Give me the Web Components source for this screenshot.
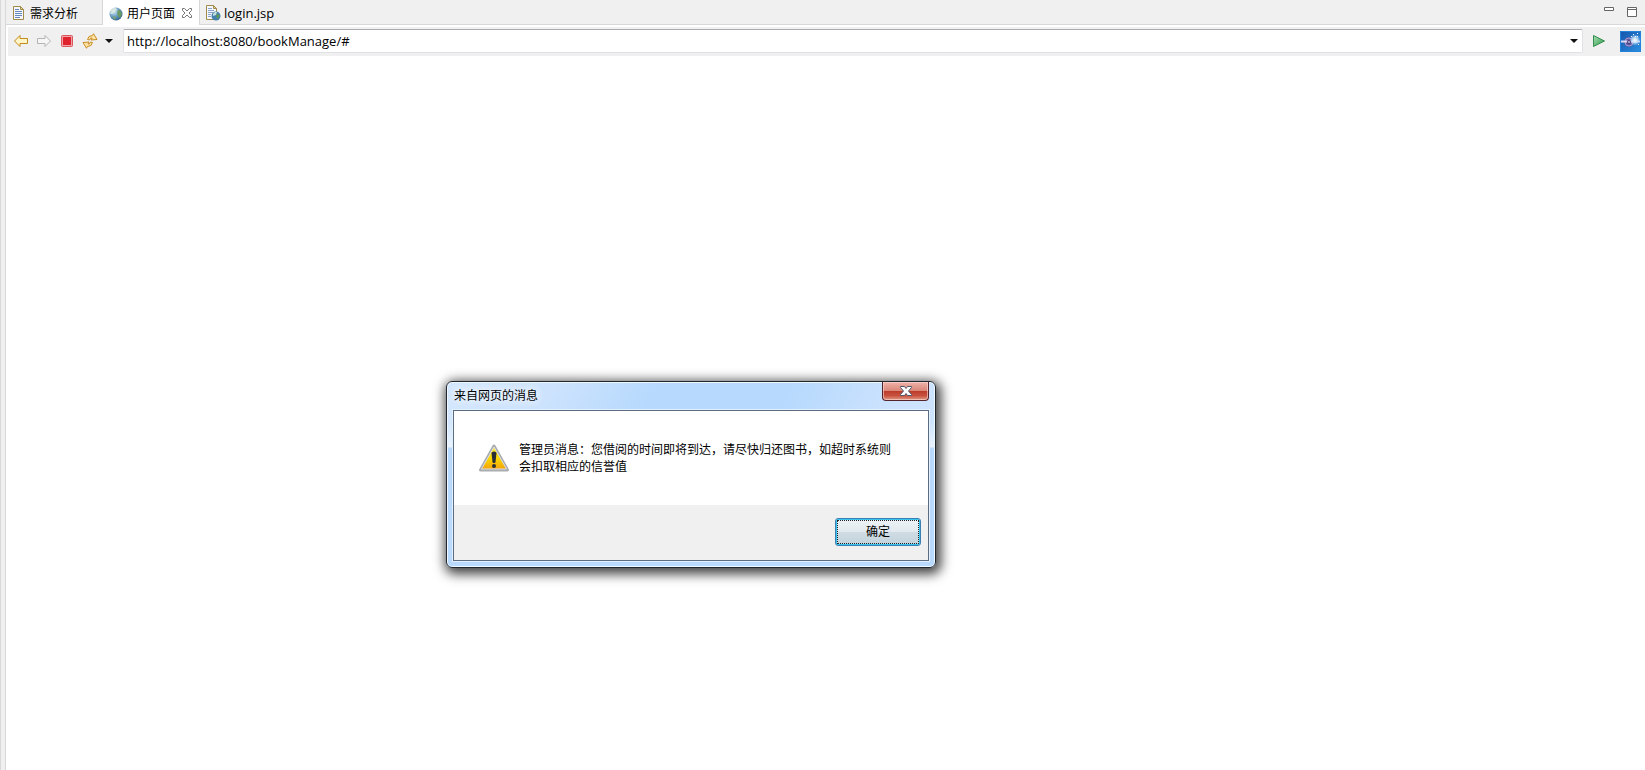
<!DOCTYPE html>
<html lang="zh-CN">
<head>
<meta charset="utf-8">
<title>用户页面</title>
<style>
    html, body {
      margin: 0;
      height: 100%;
      overflow: hidden;
    }
    body {
      font: 12px/17px "Open Sans", "Noto Sans CJK SC", sans-serif;
      color: #000;
    }
</style>
</head>
<body>
<browser-view></browser-view>

<script>
const ICONS = {
    doc: `<svg width="16" height="16" viewBox="0 0 16 16">
      <path d="M2.500 1.500h7l3 3v10h-10z" fill="#f4f8fe" stroke="#a08a4c"/>
      <path d="M9.500 1.500v3h3z" fill="#f1dc9b" stroke="#a08a4c"/>
      <path d="M4 4.500h4M4 6.500h7M4 8.500h7M4 10.500h7M4 12.500h5" stroke="#6488bd"/>
    </svg>`,
    globe: `<svg width="16" height="16" viewBox="0 0 16 16">
      <defs><radialGradient id="sea" cx=".35" cy=".3" r=".8">
        <stop offset="0" stop-color="#d5eaf5"/><stop offset=".5" stop-color="#6b9fc5"/><stop offset="1" stop-color="#245583"/>
      </radialGradient></defs>
      <circle cx="8" cy="8" r="6.500" fill="url(#sea)"/>
      <path d="M3 4q3-3 5-2l1 2-2 1-1 2-2 1-2 0z" fill="#e4efe0" opacity=".7"/>
      <path d="M10 4l2 0 2 4-2 4-2-2-1-3z" fill="#6d9a5c" opacity=".9"/>
      <path d="M5 10l3 1-1 3-2-2z" fill="#7ba36c" opacity=".9"/>
    </svg>`,
    jsp: `<svg width="16" height="16" viewBox="0 0 16 16">
      <path d="M1.500.500h7l3 3v11h-10z" fill="#f4f8fe" stroke="#a08a4c"/>
      <path d="M8.500.500v3h3z" fill="#f1dc9b" stroke="#a08a4c"/>
      <path d="M3 3.500h4M3 5.500h6M3 7.500h5M3 9.500h3M3 11.500h3" stroke="#8aa2c9"/>
      <circle cx="11" cy="11" r="4.500" fill="#447fae"/>
      <path d="M8 9q2-3 4-2l-1 3-3 1z" fill="#c4deda"/>
      <path d="M12 9l3 1-2 4-2-2z" fill="#5c965a"/>
    </svg>`,
    close: `<svg width="12" height="12" viewBox="0 0 12 12">
      <path d="M1.500 1.500h2L6 4l2.500-2.500h2v2L8 6l2.500 2.500v2h-2L6 8l-2.500 2.500h-2v-2L4 6 1.500 3.500z" fill="#fff" stroke="#777"/>
    </svg>`,
    minimize: `<svg width="12" height="12" viewBox="0 0 12 12">
      <path d="M1.500 1.500h9v3h-9z" fill="#fff" stroke="#666"/>
    </svg>`,
    maximize: `<svg width="12" height="12" viewBox="0 0 12 12">
      <path d="M1.500 1.500h9v9h-9zM1 3.500h10" fill="#fff" stroke="#666"/>
    </svg>`,
    back: `<svg width="16" height="16" viewBox="0 0 16 16">
      <path d="M1.500 8l5.500-5.500v3h7.500v5H7v3z" fill="#fff5c6" stroke="#c28b1c" stroke-linejoin="round"/>
    </svg>`,
    forward: `<svg width="16" height="16" viewBox="0 0 16 16">
      <path d="M14.500 8L9 2.500v3H1.500v5H9v3z" fill="#f6f6f6" stroke="#b4b4b4" stroke-linejoin="round"/>
    </svg>`,
    stop: `<svg width="16" height="16" viewBox="0 0 16 16">
      <rect x="2.500" y="2.500" width="11" height="11" rx="1" fill="#f0a4a6" stroke="#d9575d"/>
      <rect x="4" y="4" width="8" height="8" fill="#e0222f"/>
    </svg>`,
    refresh: `<svg width="16" height="16" viewBox="0 0 16 16">
      <defs><path id="turn" d="M5.500 6.500Q6 2.500 10.500 2.500L11.500.700l3.500 5.800-6 .5 1-2Q8.500 4.500 7.500 7z" fill="#fbe2a0" stroke="#c78e29" stroke-linejoin="round"/></defs>
      <use href="#turn"/>
      <use href="#turn" transform="rotate(180 8 8)"/>
    </svg>`,
    caret: `<svg width="8" height="4" viewBox="0 0 8 4"><path d="M0 0h8L4 4z" fill="#111"/></svg>`,
    go: `<svg width="16" height="16" viewBox="0 0 16 16">
      <defs><linearGradient id="leaf" x2="1" y2="1"><stop offset="0" stop-color="#a6deb0"/><stop offset="1" stop-color="#2f9a4c"/></linearGradient></defs>
      <path d="M2.500 2.500L13.500 8l-11 5.500z" fill="url(#leaf)" stroke="#338d4c" stroke-linejoin="round"/>
    </svg>`,
    brand: `<svg width="21" height="21" viewBox="0 0 21 21">
      <defs>
        <linearGradient id="sky" x2="1" y2="1"><stop offset="0" stop-color="#1555ab"/><stop offset="1" stop-color="#2c8fe0"/></linearGradient>
        <radialGradient id="glow"><stop offset="0" stop-color="#fff"/><stop offset=".5" stop-color="#cce4fb" stop-opacity=".8"/><stop offset="1" stop-color="#6cb0ee" stop-opacity="0"/></radialGradient>
      </defs>
      <rect width="21" height="21" fill="url(#sky)"/>
      <path d="M.500.500h20v20H.500z" fill="none" stroke="#2383dc"/>
      <circle cx="9" cy="11" r="5" fill="#5c58a0"/>
      <circle cx="9" cy="11" r="4" fill="none" stroke="#a5a0d8"/>
      <path d="M1 10.500h19" stroke="#dcdaf6" stroke-width="2"/>
      <circle cx="15" cy="9" r="6" fill="url(#glow)"/>
      <circle cx="9" cy="11" r="2" fill="#4a3a78"/>
      <path d="M8 11l2 0M13 3l1 1M17 2l1 1M15 5l1 1M11 5l1 1M18 13l1 1M17 6l1-1" fill="none" stroke="#f1f5ff"/>
    </svg>`,
    warning: `<svg width="32" height="32" viewBox="0 0 32 32">
      <defs><linearGradient id="amber" x2="0" y2="1">
        <stop offset="0" stop-color="#ffed38"/><stop offset=".55" stop-color="#f8d500"/><stop offset="1" stop-color="#f5a40c"/>
      </linearGradient></defs>
      <path d="M16 5L29.500 29h-27z" fill="#ddd" stroke="#a9acb0" stroke-width="3" stroke-linejoin="round"/>
      <path d="M16 6L28.500 28h-25z" fill="url(#amber)" stroke="#dcdde0" stroke-linejoin="round"/>
      <path d="M14.500 12q1.500-1 3 0l-1 9h-1z" fill="#292d35" stroke="#292d35" stroke-width="2" stroke-linejoin="round"/>
      <circle cx="16" cy="25" r="2" fill="#292d35"/>
    </svg>`,
    cross: `<svg width="12" height="12" viewBox="0 0 12 12">
      <path d="M.500 1.500h4L6 3.500l1.500-2h4v1L8.500 6l3 3.500v1h-4L6 8.500l-1.500 2h-4v-1L3.500 6l-3-3.500z" fill="#fff" stroke="#51566b" stroke-linejoin="round"/>
    </svg>`
};

// Buttons carry no chrome of their own, every element restyles them
const RESET = `
    button {
      display: flex;
      align-items: center;
      justify-content: center;
      margin: 0;
      padding: 0;
      border: 0;
      background: none;
      color: inherit;
      font: inherit;
    }
    button:focus { outline: none; }
    svg { display: block; flex: none; }
`;

class EditorTab extends HTMLElement {
    connectedCallback() {
        const active = this.hasAttribute("active");
        const shadow = this.attachShadow({mode: "open"});
        shadow.innerHTML = `
<style>
    ${RESET}
    :host {
      display: flex;
      align-items: center;
      gap: 6px;
      padding-left: 5px;
    }
    :host([active]) {
      background: #fff;
      border: solid #d8d8d8;
      border-width: 0 1px;
      margin-bottom: -1px;
    }
    .tab { gap: 3px; height: 100%; padding-top: 2px; }
</style>
<button class="tab" role="tab" aria-selected="${active}">${ICONS[this.getAttribute("icon")]}<span><slot></slot></span></button>
${active ? `<button aria-label="关闭">${ICONS.close}</button>` : ""}`;
    }
}

class TabBar extends HTMLElement {
    constructor() {
        super();
        const shadow = this.attachShadow({mode: "open"});
        shadow.innerHTML = `
<style>
    ${RESET}
    :host {
      display: flex;
      height: 24px;
      background: #f0f0f0;
      border-bottom: 1px solid #d8d8d8;
    }
    .tabs { display: flex; flex: 1; }
    .tabs editor-tab { min-width: 91px; }
    .latin { font-size: 13px; }
    .controls { display: flex; gap: 11px; padding-right: 7px; }
</style>
<div class="tabs" role="tablist">
  <editor-tab icon="doc">需求分析</editor-tab>
  <editor-tab icon="globe" active>用户页面</editor-tab>
  <editor-tab icon="jsp" class="latin">login.jsp</editor-tab>
</div>
<div class="controls">
  <button aria-label="最小化">${ICONS.minimize}</button>
  <button aria-label="最大化">${ICONS.maximize}</button>
</div>`;
    }
}

class AddressBar extends HTMLElement {
    constructor() {
        super();
        const shadow = this.attachShadow({mode: "open"});
        shadow.innerHTML = `
<style>
    ${RESET}
    :host {
      display: flex;
      align-items: center;
      height: 28px;
      margin: 2px 0 0 2px;
      padding-right: 4px;
      background: #f0f0f0;
      border-bottom: 1px solid #f0f0f0;
    }
    .nav { display: flex; gap: 7px; padding: 0 10px 0 5px; }
    .combo {
      display: flex;
      flex: 1;
      height: 22px;
      background: #fff;
      border: 1px solid #e0e1e5;
      border-top-color: #aaadb3;
      border-radius: 2px;
    }
    input {
      flex: 1;
      min-width: 0;
      padding: 0 3px;
      border: 0;
      outline: 0;
      background: none;
      color: inherit;
      font: inherit;
      font-size: 13px;
    }
    .drop { width: 16px; }
    .go { margin: 0 13px 0 8px; }
</style>
<div class="nav">
  <button aria-label="后退">${ICONS.back}</button>
  <button aria-label="前进">${ICONS.forward}</button>
  <button aria-label="停止">${ICONS.stop}</button>
  <button aria-label="刷新">${ICONS.refresh}</button>
  <button aria-label="更多">${ICONS.caret}</button>
</div>
<div class="combo">
  <input type="text" aria-label="地址" value="http://localhost:8080/bookManage/#" spellcheck="false">
  <button class="drop" aria-label="历史记录">${ICONS.caret}</button>
</div>
<button class="go" aria-label="转到">${ICONS.go}</button>
${ICONS.brand}`;
    }
}

class MessageDialog extends HTMLElement {
    constructor() {
        super();
        const shadow = this.attachShadow({mode: "open"});
        shadow.innerHTML = `
<style>
    ${RESET}
    :host {
      display: block;
      box-sizing: border-box;
      width: 490px;
      padding: 0 6px 6px;
      border: 1px solid #20262e;
      border-radius: 6px;
      background:
        linear-gradient(transparent 40px, rgba(240, 247, 255, .8) 65px, #b8d9fc 66px),
        linear-gradient(120deg, #d4e7fd 0, #cde3fd 18%, #b6d9fd 36%, #b6d9fd 58%, #cde3fd 78%, #d0e5fd);
      box-shadow: inset 0 0 0 1px #f0f8ff, 2px 3px 12px 3px rgba(0, 0, 0, .75);
    }
    header {
      display: flex;
      align-items: flex-start;
      justify-content: space-between;
      height: 28px;
      padding-left: 1px;
    }
    h1 {
      margin: 0;
      padding-top: 5px;
      font: inherit;
      text-shadow: 0 0 8px #fff, 0 0 8px #fff;
    }
    .close {
      box-sizing: border-box;
      width: 47px;
      height: 19px;
      border: 1px solid #54232b;
      border-top: 0;
      border-radius: 0 0 4px 4px;
      background: linear-gradient(#eeb3ab, #db8779 48%, #bc3b2b 50%, #c7503c 75%, #df9b85);
      box-shadow: inset 0 0 0 1px rgba(255, 220, 215, .6);
    }
    .body {
      border: 1px solid #5c6c80;
      background: #fff;
      box-shadow: 0 0 0 1px #e3f0fe;
    }
    .message {
      display: flex;
      align-items: flex-start;
      gap: 9px;
      height: 64px;
      padding: 30px 32px 0 24px;
    }
    p { flex: 1; margin: 0; }
    footer {
      display: flex;
      justify-content: flex-end;
      padding: 13px 7px 14px;
      background: #f0f0f0;
    }
    .ok {
      box-sizing: border-box;
      width: 86px;
      height: 28px;
      padding: 1px;
      border: 1px solid #3c7fb1;
      border-radius: 3px;
      background: linear-gradient(#edf3f6, #e2eaef 48%, #cfdce4 50%, #c3d2db);
      box-shadow: inset 0 0 0 1px #35c5f0;
    }
    .ok span {
      flex: 1;
      height: 22px;
      line-height: 22px;
      border: 1px dotted #222;
    }
</style>
<header>
  <h1><slot name="title"></slot></h1>
  <button class="close" aria-label="关闭">${ICONS.cross}</button>
</header>
<div class="body">
  <div class="message">${ICONS.warning}<p><slot></slot></p></div>
  <footer><button class="ok"><span>确定</span></button></footer>
</div>`;
        shadow.querySelectorAll("button").forEach(button => {
            button.addEventListener("click", () => this.remove());
        });
    }

    connectedCallback() {
        this.setAttribute("role", "alertdialog");
    }
}

class BrowserView extends HTMLElement {
    constructor() {
        super();
        const shadow = this.attachShadow({mode: "open"});
        shadow.innerHTML = `
<style>
    :host {
      display: flex;
      height: 100vh;
      background: #fff;
    }
    .sash {
      flex: none;
      width: 4px;
      background: #f0f0f0;
      border: solid #d8d8d8;
      border-width: 0 1px;
    }
    .view {
      display: flex;
      flex: 1;
      flex-direction: column;
      min-width: 0;
    }
    main { flex: 1; }
    /* the alert floats over the page like a desktop window */
    message-dialog {
      position: absolute;
      left: 446px;
      top: 381px;
    }
</style>
<div class="sash"></div>
<div class="view">
  <tab-bar></tab-bar>
  <address-bar></address-bar>
  <main></main>
</div>
<message-dialog>
  <span slot="title">来自网页的消息</span>
  管理员消息：您借阅的时间即将到达，请尽快归还图书，如超时系统则会扣取相应的信誉值
</message-dialog>`;
    }
}

customElements.define("editor-tab", EditorTab);
customElements.define("tab-bar", TabBar);
customElements.define("address-bar", AddressBar);
customElements.define("message-dialog", MessageDialog);
customElements.define("browser-view", BrowserView);
</script>
</body>
</html>
